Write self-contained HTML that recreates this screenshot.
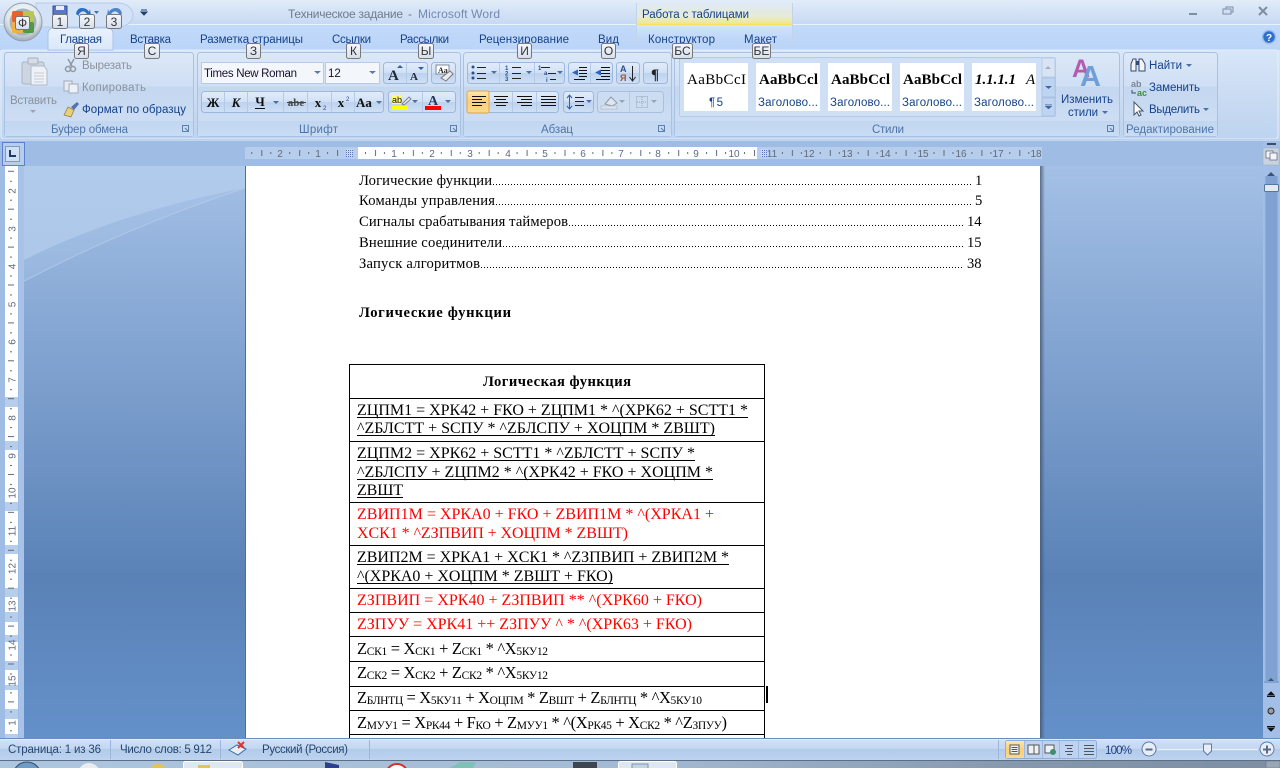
<!DOCTYPE html>
<html lang="ru">
<head>
<meta charset="utf-8">
<title>Техническое задание - Microsoft Word</title>
<style>
html,body{margin:0;padding:0;width:1280px;height:768px;overflow:hidden;background:#a0bde4}
svg{display:block}
text{white-space:pre}
.r{font-family:"Liberation Sans",sans-serif;font-size:11.5px;fill:#15428b}
.g{font-family:"Liberation Sans",sans-serif;font-size:11.5px;fill:#4e74a8}
.d{font-family:"Liberation Sans",sans-serif;font-size:11.5px;fill:#8b929c}
.k{font-family:"Liberation Sans",sans-serif;font-size:12px;fill:#333;text-anchor:middle}
.t{font-family:"Liberation Serif",serif;font-size:14.6px;fill:#000}
.f{font-family:"Liberation Serif",serif;font-size:16px;fill:#000}
.fr{font-family:"Liberation Serif",serif;font-size:16px;fill:#f00}
.m{font-family:"Liberation Serif",serif;font-size:16.5px;fill:#000}
.m tspan.s{font-size:11.5px}
.rl{font-family:"Liberation Sans",sans-serif;font-size:10px;fill:#5f6a7c;text-anchor:middle}
.st{font-family:"Liberation Serif",serif;font-size:15px;fill:#000}
.sb{font-family:"Liberation Sans",sans-serif;font-size:11.5px;fill:#24466f}
</style>
</head>
<body>
<svg xmlns="http://www.w3.org/2000/svg" width="1280" height="768" viewBox="0 0 1280 768">
<defs>
<linearGradient id="title" x1="0" y1="0" x2="0" y2="1"><stop offset="0" stop-color="#e2ecf9"/><stop offset=".5" stop-color="#d3e2f6"/><stop offset="1" stop-color="#c6d9f3"/></linearGradient>
<linearGradient id="tabs" x1="0" y1="0" x2="0" y2="1"><stop offset="0" stop-color="#c2dafa"/><stop offset="1" stop-color="#bad4f8"/></linearGradient>
<linearGradient id="rib" x1="0" y1="0" x2="0" y2="1"><stop offset="0" stop-color="#d8e6f8"/><stop offset=".5" stop-color="#cbdcf3"/><stop offset="1" stop-color="#bdd3ef"/></linearGradient>
<linearGradient id="grp" x1="0" y1="0" x2="0" y2="1"><stop offset="0" stop-color="#dce8f8"/><stop offset=".4" stop-color="#cfdff4"/><stop offset=".41" stop-color="#c4d7f0"/><stop offset="1" stop-color="#d0e0f5"/></linearGradient>
<linearGradient id="lab" x1="0" y1="0" x2="0" y2="1"><stop offset="0" stop-color="#c1d6f0"/><stop offset="1" stop-color="#c9dcf4"/></linearGradient>
<linearGradient id="btn" x1="0" y1="0" x2="0" y2="1"><stop offset="0" stop-color="#e2edfa"/><stop offset=".5" stop-color="#d0e0f5"/><stop offset=".51" stop-color="#bdd2ee"/><stop offset="1" stop-color="#cfe0f6"/></linearGradient>
<linearGradient id="act" x1="0" y1="0" x2="0" y2="1"><stop offset="0" stop-color="#fde6b0"/><stop offset=".5" stop-color="#fbcf7a"/><stop offset="1" stop-color="#fdd88e"/></linearGradient>
<linearGradient id="tip" x1="0" y1="0" x2="0" y2="1"><stop offset="0" stop-color="#f6f8fb"/><stop offset="1" stop-color="#d5dfee"/></linearGradient>
<linearGradient id="tabA" x1="0" y1="0" x2="0" y2="1"><stop offset="0" stop-color="#e9f2fd"/><stop offset="1" stop-color="#dbe8f9"/></linearGradient>
<linearGradient id="ctx" x1="0" y1="0" x2="0" y2="1"><stop offset="0" stop-color="#dfe9f6"/><stop offset=".6" stop-color="#e6ebd8"/><stop offset=".92" stop-color="#f0e98f"/><stop offset="1" stop-color="#f8df4a"/></linearGradient>
<linearGradient id="ctx2" x1="0" y1="0" x2="0" y2="1"><stop offset="0" stop-color="#d6e6fb"/><stop offset="1" stop-color="#bad4f8" stop-opacity="0"/></linearGradient>
<linearGradient id="doc" x1="0" y1="0" x2="0" y2="1"><stop offset="0" stop-color="#a4c0e6"/><stop offset=".27" stop-color="#87a8d4"/><stop offset=".72" stop-color="#5a82b7"/><stop offset="1" stop-color="#6490c9"/></linearGradient>
<linearGradient id="stat" x1="0" y1="0" x2="0" y2="1"><stop offset="0" stop-color="#d3e3f7"/><stop offset=".5" stop-color="#c2d6f0"/><stop offset=".51" stop-color="#b2cbea"/><stop offset="1" stop-color="#bdd3ef"/></linearGradient>
<linearGradient id="task" x1="0" y1="0" x2="1" y2="0"><stop offset="0" stop-color="#adc6df"/><stop offset=".5" stop-color="#a4bad4"/><stop offset=".8" stop-color="#8497ad"/><stop offset="1" stop-color="#7d8ea3"/></linearGradient>
<linearGradient id="shR" x1="0" y1="0" x2="1" y2="0"><stop offset="0" stop-color="#3f5068" stop-opacity=".75"/><stop offset="1" stop-color="#3f5068" stop-opacity="0"/></linearGradient>
<linearGradient id="sbar" x1="0" y1="0" x2="1" y2="0"><stop offset="0" stop-color="#a9c4ea"/><stop offset=".15" stop-color="#7fa2d2"/><stop offset=".85" stop-color="#7fa2d2"/><stop offset="1" stop-color="#a9c4ea"/></linearGradient>
<radialGradient id="orb" cx=".5" cy=".35" r=".7"><stop offset="0" stop-color="#fff"/><stop offset=".6" stop-color="#dfe5ea"/><stop offset="1" stop-color="#8e9aa6"/></radialGradient>
<pattern id="hr" patternUnits="userSpaceOnUse" x="356" y="147" width="37.9" height="12"><rect x="9" y="5" width="1" height="2" fill="#5f6a7c"/><rect x="19" y="3" width="1" height="6" fill="#5f6a7c"/><rect x="28" y="5" width="1" height="2" fill="#5f6a7c"/></pattern>
<pattern id="vr" patternUnits="userSpaceOnUse" x="5" y="190.7" width="13" height="37.9"><rect x="5" y="9" width="2" height="1" fill="#5f6a7c"/><rect x="3" y="18" width="6" height="1" fill="#5f6a7c"/><rect x="5" y="28" width="2" height="1" fill="#5f6a7c"/></pattern>
<pattern id="grid" patternUnits="userSpaceOnUse" width="2" height="2"><rect width="2" height="2" fill="#5878b8"/><rect x="1" width="1" height="2" fill="#c9d8f0"/><rect y="1" width="2" height="1" fill="#c9d8f0"/></pattern>
</defs>

<!-- title + tabs + ribbon -->
<rect width="1280" height="25" fill="url(#title)"/>
<rect y="24" width="1280" height="1" fill="#e9f1fb"/>
<rect y="25" width="1280" height="26" fill="url(#tabs)"/>
<rect y="50" width="1280" height="90" fill="url(#rib)"/>
<rect x="1" y="50" width="1277" height="89" rx="3" fill="url(#rib)" stroke="#e4eefb"/>
<rect y="139" width="1280" height="2" fill="#bdd0ec"/>
<rect y="141" width="1280" height="25" fill="#9ebce4"/>
<rect y="140" width="1280" height="1" fill="#c4d6ee"/>

<!-- QAT -->
<path d="M36 3H118a15 12 0 0 1 15 12a15 12 0 0 1-15 12H36Z" fill="#d3e2f6" stroke="#b6cbe9"/>
<rect x="53" y="6" width="14" height="10" fill="#5a76c4" stroke="#2d4a9e"/>
<rect x="56" y="6" width="8" height="4" fill="#e9eef8"/>
<path d="M76 14q1-6 6-6t7 4l1-3 1 7-7-1 3-1q-3-4-6-2t-2 4Z" fill="#2e6fc1"/>
<path d="M94 11h5l-2.500 3Z" fill="#4a6fa5"/>
<path d="M122 14q-1-6-6-6t-7 4l-1-3-1 7 7-1-3-1q3-4 6-2t2 4Z" fill="#4d84c9"/>
<path d="M141 10h6M141 12h6l-3 3Z" stroke="#27406b" fill="#27406b"/>

<!-- office orb -->
<circle cx="23" cy="22" r="19" fill="url(#orb)" stroke="#8fa0b0"/>
<circle cx="23" cy="22" r="13.500" fill="#a8b2ba"/>
<rect x="12" y="11" width="11" height="11" rx="2" fill="#e8622a"/>
<rect x="23" y="11" width="11" height="11" rx="2" fill="#b8c84a"/>
<rect x="12" y="22" width="11" height="11" rx="2" fill="#f0b23a"/>
<rect x="23" y="22" width="11" height="11" rx="2" fill="#4f9a4a"/>
<rect x="17" y="17" width="12" height="11" fill="#e6e9ec" stroke="#888" stroke-width=".5"/>

<!-- Title text -->
<text x="288" y="18" font-family="Liberation Sans,sans-serif" font-size="12" fill="#6f7b8c" textLength="115">Техническое задание</text>
<text x="408" y="18" font-family="Liberation Sans,sans-serif" font-size="12" fill="#6f7b8c">-</text>
<text x="418" y="18" font-family="Liberation Sans,sans-serif" font-size="12" fill="#7589b0" textLength="82">Microsoft Word</text>

<!-- Context tab -->
<rect x="636" y="3" width="156" height="22" fill="url(#ctx)"/>
<rect x="636" y="25" width="156" height="20" fill="url(#ctx2)"/>
<path d="M636.500 3V46M792.500 3V46" stroke="#c2d3ea"/>
<text x="642" y="18" class="r" textLength="107">Работа с таблицами</text>

<!-- window buttons -->
<rect x="1189" y="13" width="8" height="2" fill="#7e8ea3"/>
<rect x="1226" y="7" width="7" height="5" fill="none" stroke="#7e8ea3"/>
<rect x="1223" y="9" width="8" height="5" fill="#cfdff5" stroke="#7e8ea3"/>
<path d="M1259 7l8 8M1267 7l-8 8" stroke="#7e8ea3" stroke-width="2"/>
<circle cx="1269" cy="37" r="6.500" fill="#2f6fd0" stroke="#9ec0ec" stroke-width="1.500"/>
<text x="1269" y="41" font-family="Liberation Sans,sans-serif" font-size="10" font-weight="bold" fill="#fff" text-anchor="middle">?</text>

<!-- Tabs -->
<path d="M48 50V34q0-6 6-6H107q6 0 6 6V50Z" fill="url(#tabA)" stroke="#a9c4e8"/>
<text x="60" y="43" class="r" textLength="42">Главная</text>
<text x="130" y="43" class="r" textLength="41">Вставка</text>
<text x="200" y="43" class="r" textLength="103">Разметка страницы</text>
<text x="332" y="43" class="r" textLength="39">Ссылки</text>
<text x="400" y="43" class="r" textLength="49">Рассылки</text>
<text x="479" y="43" class="r" textLength="90">Рецензирование</text>
<text x="598" y="43" class="r" textLength="21">Вид</text>
<text x="648" y="43" class="r" textLength="67">Конструктор</text>
<text x="744" y="43" class="r" textLength="33">Макет</text>

<!-- Groups -->
<g stroke="#a9c2e4">
<rect x="4.500" y="52.500" width="189" height="84" rx="3" fill="url(#grp)"/>
<rect x="197.500" y="52.500" width="263" height="84" rx="3" fill="url(#grp)"/>
<rect x="463.500" y="52.500" width="208" height="84" rx="3" fill="url(#grp)"/>
<rect x="674.500" y="52.500" width="445" height="84" rx="3" fill="url(#grp)"/>
<rect x="1123.500" y="52.500" width="94" height="84" rx="3" fill="url(#grp)"/>
</g>
<rect x="5" y="121" width="188" height="15" fill="url(#lab)"/>
<rect x="198" y="121" width="262" height="15" fill="url(#lab)"/>
<rect x="464" y="121" width="207" height="15" fill="url(#lab)"/>
<rect x="675" y="121" width="444" height="15" fill="url(#lab)"/>
<rect x="1124" y="121" width="93" height="15" fill="url(#lab)"/>
<text x="51" y="133" class="g" textLength="77">Буфер обмена</text>
<text x="299" y="133" class="g" textLength="39">Шрифт</text>
<text x="541" y="133" class="g" textLength="32">Абзац</text>
<text x="872" y="133" class="g" textLength="32">Стили</text>
<text x="1126" y="133" class="g" textLength="88">Редактирование</text>
<g fill="none" stroke="#5f7fa8">
<path d="M182.500 125.500h6v6h-6ZM185 128l3 3"/>
<path d="M450.500 125.500h6v6h-6ZM453 128l3 3"/>
<path d="M658.500 125.500h6v6h-6ZM661 128l3 3"/>
<path d="M1107.500 125.500h6v6h-6ZM1110 128l3 3"/>
</g>

<!-- Clipboard -->
<rect x="22" y="62" width="22" height="22" rx="2" fill="#cdd5e0" stroke="#aab5c3"/>
<rect x="28" y="58" width="10" height="6" rx="1" fill="#d8dde5" stroke="#a6b0bd"/>
<path d="M31 66h13l3 4v15H31Z" fill="#eef2f8" stroke="#b0b9c5"/>
<path d="M34 73h10M34 76h10M34 79h10M34 82h10" stroke="#c4cbd6"/>
<text x="10" y="104" class="d" textLength="47">Вставить</text>
<path d="M30 110h6l-3 3Z" fill="#9aa3ae"/>
<path d="M68 59l4 7M74 59l-4 7" stroke="#8f98a5" stroke-width="1.500"/>
<circle cx="68" cy="69" r="2.500" fill="none" stroke="#8f98a5" stroke-width="1.500"/><circle cx="73" cy="69" r="2.500" fill="none" stroke="#8f98a5" stroke-width="1.500"/>
<text x="82" y="69" class="d" textLength="50">Вырезать</text>
<rect x="64" y="81" width="8" height="10" fill="#e6ebf2" stroke="#a2abb8"/><rect x="69" y="84" width="9" height="9" fill="#eef2f8" stroke="#a2abb8"/>
<text x="82" y="91" class="d" textLength="64">Копировать</text>
<path d="M64 115l4-8 6 3-3 7Z" fill="#e8cf78" stroke="#8c7a3a" stroke-width=".7"/>
<path d="M71 107l6-5 2 2-5 6Z" fill="#5572b4"/>
<text x="82" y="113" class="r" textLength="104">Формат по образцу</text>

<!-- Font -->
<rect x="201.500" y="62.500" width="122" height="21" fill="#f3f7fc" stroke="#b5cbe8"/>
<rect x="325.500" y="62.500" width="54" height="21" fill="#f3f7fc" stroke="#b5cbe8"/>
<text x="204" y="77" font-family="Liberation Sans,sans-serif" font-size="11.500" fill="#1a1030" textLength="93">Times New Roman</text>
<text x="328" y="77" font-family="Liberation Sans,sans-serif" font-size="11.500" fill="#1a1030">12</text>
<path d="M314 71h7l-3.500 3ZM369 71h7l-3.500 3Z" fill="#5a7aa8"/>
<rect x="383.500" y="62.500" width="44" height="21" rx="3" fill="url(#btn)" stroke="#9db8dd"/>
<path d="M406.500 63v20" stroke="#b4cae7"/>
<text x="388" y="80" font-family="Liberation Serif,serif" font-size="15" font-weight="bold" fill="#1e2a3a">A</text>
<path d="M397 68h6l-3-3Z" fill="#2f5fa8"/>
<text x="410" y="80" font-family="Liberation Serif,serif" font-size="11" font-weight="bold" fill="#1e2a3a">A</text>
<path d="M418 67h6l-3 3Z" fill="#2f5fa8"/>
<rect x="431.500" y="62.500" width="24" height="21" rx="3" fill="url(#btn)" stroke="#9db8dd"/>
<rect x="436" y="65" width="13" height="9" fill="#fff" stroke="#7c8899"/>
<text x="438" y="73" font-family="Liberation Serif,serif" font-size="8" font-weight="bold" fill="#222">Aa</text>
<path d="M441 78l9-7 3 3-7 7Z" fill="#e8ecf2" stroke="#777"/>

<rect x="201.500" y="91.500" width="182" height="21" rx="3" fill="url(#btn)" stroke="#9db8dd"/>
<path d="M224.500 92v20M247.500 92v20M283.500 92v20M307.500 92v20M331.500 92v20M354.500 92v20" stroke="#b4cae7"/>
<g font-family="Liberation Serif,serif" font-weight="bold" fill="#111" text-anchor="middle">
<text x="213" y="107" font-size="13">Ж</text>
<text x="236" y="107" font-size="13" font-style="italic">К</text>
<text x="260" y="106" font-size="13">Ч</text>
<text x="341" y="107" font-size="13">x</text>
<text x="318" y="107" font-size="13">x</text>
<text x="364" y="107" font-size="13">Aa</text>
</g>
<rect x="255" y="108" width="10" height="1" fill="#111"/>
<text x="296" y="106" text-anchor="middle" font-family="Liberation Serif,serif" font-size="11" font-weight="bold" fill="#444">abe</text>
<path d="M287 102.500h19" stroke="#444"/>
<text x="323" y="110" font-family="Liberation Sans,sans-serif" font-size="6" fill="#27408b">2</text>
<text x="346" y="101" font-family="Liberation Sans,sans-serif" font-size="6" fill="#27408b">2</text>
<path d="M273 101h6l-3 3ZM376 101h6l-3 3Z" fill="#4f6f9f"/>
<rect x="388.500" y="91.500" width="67" height="21" rx="3" fill="url(#btn)" stroke="#9db8dd"/>
<path d="M422.500 92v20" stroke="#b4cae7"/>
<rect x="392" y="106" width="16" height="4" fill="#ff0"/>
<rect x="392" y="95" width="9" height="9" fill="#ffff66"/>
<text x="392" y="103" font-family="Liberation Sans,sans-serif" font-size="9" fill="#111">ab</text>
<path d="M402 104l7-7 2 2-7 6Z" fill="#dfe4ea" stroke="#6b7280" stroke-width=".8"/>
<path d="M412 100h6l-3 3Z" fill="#4f6f9f"/>
<text x="433" y="105" text-anchor="middle" font-family="Liberation Serif,serif" font-size="14" font-weight="bold" fill="#24385a">A</text>
<rect x="425" y="106" width="16" height="4" fill="#f00"/>
<path d="M445 100h6l-3 3Z" fill="#4f6f9f"/>

<!-- Paragraph -->
<rect x="467.500" y="62.500" width="97" height="21" rx="3" fill="url(#btn)" stroke="#9db8dd"/>
<path d="M499.500 63v20M534.500 63v20" stroke="#b4cae7"/>
<g fill="#2b4f8f"><circle cx="473" cy="67" r="1.500"/><circle cx="473" cy="73" r="1.500"/><circle cx="473" cy="78" r="1.500"/></g>
<path d="M477 67.500h9M477 73.500h9M477 78.500h9M512 67.500h9M512 73.500h9M512 78.500h9" stroke="#222"/>
<g font-family="Liberation Sans,sans-serif" font-size="6" font-weight="bold" fill="#2b4f8f"><text x="505" y="70">1</text><text x="505" y="75.500">2</text><text x="505" y="81">3</text><text x="538" y="70">1</text><text x="544" y="75">a</text><text x="546" y="82">i</text></g>
<path d="M541 67.500h9M548 73.500h8M550 79.500h6" stroke="#222"/>
<path d="M491 71h6l-3 3ZM526 71h6l-3 3ZM557 71h6l-3 3Z" fill="#4f6f9f"/>
<rect x="568.500" y="62.500" width="44" height="21" rx="3" fill="url(#btn)" stroke="#9db8dd"/>
<path d="M590.500 63v20" stroke="#b4cae7"/>
<path d="M572 72.500l6-3v6Z" fill="#2f64b8"/><path d="M595 72.500l6-3v6Z" fill="#2f64b8"/>
<path d="M579 67.500h8M579 70.500h8M579 73.500h8M579 76.500h8M574 79.500h11M601 67.500h9M601 70.500h9M601 73.500h9M601 76.500h9M596 79.500h14" stroke="#111"/>
<rect x="616.500" y="62.500" width="23" height="21" rx="3" fill="url(#btn)" stroke="#9db8dd"/>
<text x="620" y="72" font-family="Liberation Sans,sans-serif" font-size="9" font-weight="bold" fill="#2b4f8f">A</text>
<text x="620" y="81" font-family="Liberation Sans,sans-serif" font-size="9" font-weight="bold" fill="#a2513a">Я</text>
<path d="M632.500 66v14M629.500 77l3 4 3-4" stroke="#222" fill="none"/>
<rect x="643.500" y="62.500" width="24" height="21" rx="3" fill="url(#btn)" stroke="#9db8dd"/>
<text x="655" y="79" text-anchor="middle" font-family="Liberation Serif,serif" font-size="15" font-weight="bold" fill="#222">¶</text>

<rect x="467.500" y="91.500" width="91" height="21" rx="3" fill="url(#btn)" stroke="#9db8dd"/>
<rect x="467" y="91" width="22" height="22" rx="2" fill="url(#act)" stroke="#d9a54e"/>
<path d="M512.500 92v20M536.500 92v20" stroke="#b4cae7"/>
<path d="M472 96.500h14M472 99.500h10M472 102.500h14M472 105.500h10M494 96.500h14M496 99.500h10M494 102.500h14M496 105.500h10M517 96.500h15M521 99.500h11M517 102.500h15M521 105.500h11M541 96.500h15M541 99.500h15M541 102.500h15M541 105.500h15" stroke="#111"/>
<rect x="563.500" y="91.500" width="30" height="21" rx="3" fill="url(#btn)" stroke="#9db8dd"/>
<path d="M569.500 95v14M567 98l2.500-3 2.500 3M567 106l2.500 3 2.500-3" stroke="#2f5fa8" fill="none"/>
<path d="M575 97.500h9M575 101.500h9M575 105.500h9" stroke="#222"/>
<path d="M586 100h6l-3 3Z" fill="#4f6f9f"/>
<rect x="597.500" y="91.500" width="66" height="21" rx="3" fill="#ccdcf1" stroke="#a9c0e0"/>
<path d="M605 104l6-7 6 6-5 3Z" fill="#e0e6ee" stroke="#8e9aa9"/>
<rect x="601" y="106" width="16" height="3" fill="#dfe5ec" stroke="#9ba8b8" stroke-width=".5"/>
<path d="M619 100h6l-3 3ZM651 100h6l-3 3Z" fill="#93a5bd"/>
<path d="M629.500 92v20" stroke="#b4cae7"/>
<rect x="636.500" y="96.500" width="11" height="11" fill="none" stroke="#92a3bb" stroke-dasharray="1 1"/>
<path d="M642 97v10M637 102h10" stroke="#92a3bb" stroke-dasharray="1 1"/>

<!-- Styles -->
<rect x="679.500" y="57.500" width="376" height="59" rx="2" fill="#cfe0f5" stroke="#b2c9e8"/>
<g fill="#fff"><rect x="684" y="63" width="64" height="48"/><rect x="756" y="63" width="64" height="48"/><rect x="828" y="63" width="64" height="48"/><rect x="900" y="63" width="64" height="48"/><rect x="972" y="63" width="64" height="48"/></g>
<text x="687" y="84" class="st" textLength="59">AaBbCcI</text>
<g font-weight="bold">
<text x="759" y="84" class="st" textLength="59">AaBbCcl</text>
<text x="831" y="84" class="st" textLength="59">AaBbCcl</text>
<text x="903" y="84" class="st" textLength="59">AaBbCcl</text>
<text x="975" y="84" class="st" font-style="italic" textLength="41">1.1.1.1</text>
</g>
<text x="1026" y="84" class="st" font-style="italic" fill="#333">A</text>
<text x="709" y="106" class="r" textLength="14">¶ 5</text>
<text x="758" y="106" class="r" textLength="60">Заголово...</text>
<text x="830" y="106" class="r" textLength="60">Заголово...</text>
<text x="902" y="106" class="r" textLength="60">Заголово...</text>
<text x="974" y="106" class="r" textLength="60">Заголово...</text>
<rect x="1042" y="58" width="13" height="19" fill="#d8e4f4" stroke="#b9cce8"/>
<rect x="1042" y="78" width="13" height="19" fill="#bfd4f0" stroke="#a9c2e4"/>
<rect x="1042" y="98" width="13" height="18" fill="#bfd4f0" stroke="#a9c2e4"/>
<path d="M1045 69h6l-3-3Z" fill="#a5b0bf"/>
<path d="M1045 86h7l-3.500 3Z" fill="#41679f"/>
<path d="M1045 104.500h7M1045 106h7l-3.500 3Z" fill="#41679f" stroke="#41679f" stroke-width=".5"/>
<text x="1072" y="77" font-family="Liberation Sans,sans-serif" font-size="25" font-weight="bold" fill="#b25bb0">A</text>
<text x="1080" y="86" font-family="Liberation Sans,sans-serif" font-size="29" font-weight="bold" fill="#6f9fd6">A</text>
<text x="1061" y="103" class="r" fill="#244e86" textLength="52">Изменить</text>
<text x="1068" y="116" class="r" textLength="30">стили</text>
<path d="M1102 111h6l-3 3Z" fill="#4f6f9f"/>

<!-- Editing -->
<path d="M1131 71v-7l2-5h3v12ZM1139 71V59h3l3 5v7Z" fill="#f1f3f6" stroke="#334a70"/>
<rect x="1136" y="61" width="3" height="4" fill="#334a70"/>
<text x="1149" y="69" class="r" textLength="33">Найти</text>
<path d="M1186 64h6l-3 3Z" fill="#4f6f9f"/>
<text x="1131" y="87" font-family="Liberation Sans,sans-serif" font-size="9" font-weight="bold" fill="#7c8696">ab</text>
<text x="1137" y="96" font-family="Liberation Sans,sans-serif" font-size="9" font-weight="bold" fill="#3d8f3a">ac</text>
<path d="M1132 90v3h4" stroke="#334a70" fill="none"/>
<text x="1149" y="91" class="r" textLength="51">Заменить</text>
<path d="M1134 102v13l3-3 2 4 2-1-2-4h4Z" fill="#fff" stroke="#4a5568"/>
<text x="1149" y="113" class="r" textLength="51">Выделить</text>
<path d="M1203 108h6l-3 3Z" fill="#4f6f9f"/>

<!-- Key tips -->
<g stroke="#777" fill="url(#tip)">
<rect x="15.500" y="16.500" width="14" height="13" rx="2"/>
<rect x="52.500" y="14.500" width="15" height="14" rx="2"/>
<rect x="79.500" y="14.500" width="15" height="14" rx="2"/>
<rect x="106.500" y="14.500" width="15" height="14" rx="2"/>
<rect x="74.500" y="43.500" width="14" height="15" rx="2"/>
<rect x="144.500" y="43.500" width="15" height="15" rx="2"/>
<rect x="246.500" y="43.500" width="14" height="15" rx="2"/>
<rect x="346.500" y="43.500" width="14" height="15" rx="2"/>
<rect x="418.500" y="43.500" width="15" height="15" rx="2"/>
<rect x="517.500" y="43.500" width="14" height="15" rx="2"/>
<rect x="601.500" y="43.500" width="14" height="15" rx="2"/>
<rect x="672.500" y="43.500" width="20" height="15" rx="2"/>
<rect x="752.500" y="43.500" width="18" height="15" rx="2"/>
</g>
<text x="22.500" y="27" class="k">Ф</text>
<text x="60" y="26" class="k">1</text>
<text x="87" y="26" class="k">2</text>
<text x="114" y="26" class="k">3</text>
<text x="81.500" y="55" class="k">Я</text>
<text x="152" y="55" class="k">С</text>
<text x="253.500" y="55" class="k">З</text>
<text x="353.500" y="55" class="k">К</text>
<text x="426" y="55" class="k">Ы</text>
<text x="524.500" y="55" class="k">И</text>
<text x="608.500" y="55" class="k">О</text>
<text x="682.500" y="55" class="k">БС</text>
<text x="761.500" y="55" class="k">БЕ</text>

<!-- Ruler toggle -->
<rect x="2.500" y="142.500" width="22" height="23" fill="#b7cdec" stroke="#5a80d0"/>
<rect x="5.500" y="146.500" width="14" height="15" fill="#cfe0f5" stroke="#7d9ac8"/>
<path d="M10 150v6h6" stroke="#1f3a68" stroke-width="2" fill="none"/>

<!-- Doc area -->
<rect x="24" y="166" width="1240" height="572" fill="url(#doc)"/>
<path d="M24 166H800L245 188Q120 212 24 260Z" fill="#b6cfee" opacity=".75"/>
<path d="M24 260Q120 212 245 187V188Q130 226 24 282Z" fill="#b0c9ea" opacity=".3"/>
<path d="M24 281Q130 226 245 188" stroke="#c3d6ef" stroke-opacity=".45" stroke-width="1" fill="none"/>

<!-- vertical ruler -->
<rect x="0" y="166" width="24" height="572" fill="#9ebce4"/>
<rect x="19" y="166" width="5" height="572" fill="#a9c3e8"/>
<rect x="5" y="166" width="13" height="572" fill="#fff"/>
<g fill="#b7cdec">
<rect x="5" y="397" width="13" height="10"/><rect x="5" y="441" width="13" height="9"/><rect x="5" y="502" width="13" height="9"/><rect x="5" y="545" width="13" height="9"/><rect x="5" y="588" width="13" height="9"/><rect x="5" y="612" width="13" height="10"/><rect x="5" y="635" width="13" height="7"/><rect x="5" y="661" width="13" height="9"/><rect x="5" y="685" width="13" height="5"/><rect x="5" y="709" width="13" height="10"/><rect x="5" y="734" width="13" height="4"/>
</g>
<rect x="5" y="166" width="13" height="572" fill="url(#vr)"/>
<g>
<text class="rl" transform="translate(15.500 191) rotate(-90)">2</text>
<text class="rl" transform="translate(15.500 229) rotate(-90)">3</text>
<text class="rl" transform="translate(15.500 266.500) rotate(-90)">4</text>
<text class="rl" transform="translate(15.500 304.500) rotate(-90)">5</text>
<text class="rl" transform="translate(15.500 342) rotate(-90)">6</text>
<text class="rl" transform="translate(15.500 380) rotate(-90)">7</text>
<text class="rl" transform="translate(15.500 418) rotate(-90)">8</text>
<text class="rl" transform="translate(15.500 456) rotate(-90)">9</text>
<text class="rl" transform="translate(15.500 493) rotate(-90)">10</text>
<text class="rl" transform="translate(15.500 531) rotate(-90)">11</text>
<text class="rl" transform="translate(15.500 568.500) rotate(-90)">12</text>
<text class="rl" transform="translate(15.500 606) rotate(-90)">13</text>
<text class="rl" transform="translate(15.500 645) rotate(-90)">14</text>
<text class="rl" transform="translate(15.500 681) rotate(-90)">15</text>
<text class="rl" transform="translate(15.500 723) rotate(-90)">1</text>
</g>

<!-- horizontal ruler -->
<rect x="245" y="147" width="797" height="12" fill="#b7cdec"/>
<rect x="358" y="147" width="399" height="12" fill="#fff"/>
<rect x="245" y="147" width="797" height="12" fill="url(#hr)"/>
<rect x="346" y="149" width="7" height="8" fill="url(#grid)"/>
<rect x="761" y="149" width="7" height="8" fill="url(#grid)"/>
<g>
<text x="280" y="157" class="rl">2</text><text x="318" y="157" class="rl">1</text>
<text x="394" y="157" class="rl">1</text><text x="432" y="157" class="rl">2</text><text x="470" y="157" class="rl">3</text><text x="508" y="157" class="rl">4</text><text x="545" y="157" class="rl">5</text><text x="583" y="157" class="rl">6</text><text x="621" y="157" class="rl">7</text><text x="658" y="157" class="rl">8</text><text x="696" y="157" class="rl">9</text><text x="734" y="157" class="rl">10</text><text x="772" y="157" class="rl">11</text><text x="809" y="157" class="rl">12</text><text x="847" y="157" class="rl">13</text><text x="885" y="157" class="rl">14</text><text x="923" y="157" class="rl">15</text><text x="961" y="157" class="rl">16</text><text x="998" y="157" class="rl">17</text><text x="1036" y="157" class="rl">18</text>
</g>

<!-- page -->
<rect x="245" y="166" width="1" height="572" fill="#5c6c84"/>
<rect x="1040" y="166" width="5" height="572" fill="url(#shR)"/>
<rect x="246" y="166" width="794" height="572" fill="#fff"/>

<!-- TOC -->
<g>
<text class="t" x="359" y="185" textLength="133">Логические функции</text>
<text class="t" x="359" y="205" textLength="136">Команды управления</text>
<text class="t" x="359" y="226" textLength="209">Сигналы срабатывания таймеров</text>
<text class="t" x="359" y="247" textLength="143">Внешние соединители</text>
<text class="t" x="359" y="268" textLength="121">Запуск алгоритмов</text>
<text class="t" x="975" y="185">1</text>
<text class="t" x="975" y="205">5</text>
<text class="t" x="967" y="226">14</text>
<text class="t" x="967" y="247">15</text>
<text class="t" x="967" y="268">38</text>
</g>
<g stroke="#000" stroke-dasharray="1 2">
<path d="M493 184.500H971M496 204.500H971M569 225.500H963M503 246.500H963M481 267.500H963"/>
</g>
<text x="359" y="317" class="t" font-weight="bold" textLength="152">Логические функции</text>

<!-- table -->
<g stroke="#000" fill="none">
<path d="M349.500 364.500H764.500M349.500 398.500H764.500M349.500 441.500H764.500M349.500 502.500H764.500M349.500 545.500H764.500M349.500 588.500H764.500M349.500 612.500H764.500M349.500 636.500H764.500M349.500 661.500H764.500M349.500 686.500H764.500M349.500 710.500H764.500M349.500 734.500H764.500M349.500 364V738M764.500 364V738"/>
</g>
<text x="483" y="386" class="t" font-weight="bold" textLength="148">Логическая функция</text>
<text x="357" y="415" class="f" textLength="391">ZЦПМ1 = XРК42 + FКО + ZЦПМ1 * ^(XРК62 + SСТТ1 *</text>
<text x="357" y="433" class="f" textLength="358">^ZБЛСТТ + SСПУ * ^ZБЛСПУ + XОЦПМ * ZВШТ)</text>
<text x="357" y="458" class="f" textLength="338">ZЦПМ2 = XРК62 + SСТТ1 * ^ZБЛСТТ + SСПУ *</text>
<text x="357" y="477" class="f" textLength="356">^ZБЛСПУ + ZЦПМ2 * ^(XРК42 + FКО + XОЦПМ *</text>
<text x="357" y="495" class="f" textLength="46">ZВШТ</text>
<text x="357" y="519" class="fr" textLength="357">ZВИП1М = XРКА0 + FКО + ZВИП1М * ^(XРКА1 +</text>
<text x="357" y="538" class="fr" textLength="271">XСК1 * ^ZЗПВИП + XОЦПМ * ZВШТ)</text>
<text x="357" y="562" class="f" textLength="372">ZВИП2М = XРКА1 + XСК1 * ^ZЗПВИП + ZВИП2М *</text>
<text x="357" y="581" class="f" textLength="256">^(XРКА0 + XОЦПМ * ZВШТ + FКО)</text>
<path d="M357 417.500H748M357 435.500H715M357 460.500H695M357 479.500H713M357 497.500H403M357 564.500H729M357 583.500H613" stroke="#000"/>
<text x="357" y="605" class="fr" textLength="345">ZЗПВИП = XРК40 + ZЗПВИП ** ^(XРК60 + FКО)</text>
<text x="357" y="629" class="fr" textLength="335">ZЗПУУ = XРК41 ++ ZЗПУУ ^ * ^(XРК63 + FКО)</text>
<text x="357" y="654" class="m" textLength="191">Z<tspan class="s" dy="1">СК1</tspan><tspan dy="-1"> = X</tspan><tspan class="s" dy="1">СК1</tspan><tspan dy="-1"> + Z</tspan><tspan class="s" dy="1">СК1</tspan><tspan dy="-1"> * ^X</tspan><tspan class="s" dy="1">5КУ12</tspan></text>
<text x="357" y="678" class="m" textLength="191">Z<tspan class="s" dy="1">СК2</tspan><tspan dy="-1"> = X</tspan><tspan class="s" dy="1">СК2</tspan><tspan dy="-1"> + Z</tspan><tspan class="s" dy="1">СК2</tspan><tspan dy="-1"> * ^X</tspan><tspan class="s" dy="1">5КУ12</tspan></text>
<text x="357" y="703" class="m" textLength="345">Z<tspan class="s" dy="1">БЛНТЦ</tspan><tspan dy="-1"> = X</tspan><tspan class="s" dy="1">5КУ11</tspan><tspan dy="-1"> + X</tspan><tspan class="s" dy="1">ОЦПМ</tspan><tspan dy="-1"> * Z</tspan><tspan class="s" dy="1">ВШТ</tspan><tspan dy="-1"> + Z</tspan><tspan class="s" dy="1">БЛНТЦ</tspan><tspan dy="-1"> * ^X</tspan><tspan class="s" dy="1">5КУ10</tspan></text>
<text x="357" y="728" class="m" textLength="370">Z<tspan class="s" dy="1">МУУ1</tspan><tspan dy="-1"> = X</tspan><tspan class="s" dy="1">РК44</tspan><tspan dy="-1"> + F</tspan><tspan class="s" dy="1">КО</tspan><tspan dy="-1"> + Z</tspan><tspan class="s" dy="1">МУУ1</tspan><tspan dy="-1"> * ^(X</tspan><tspan class="s" dy="1">РК45</tspan><tspan dy="-1"> + X</tspan><tspan class="s" dy="1">СК2</tspan><tspan dy="-1"> * ^Z</tspan><tspan class="s" dy="1">ЗПУУ</tspan><tspan dy="-1">)</tspan></text>
<rect x="766" y="686" width="2" height="17" fill="#000"/>

<!-- scrollbar -->
<rect x="1263" y="141" width="17" height="597" fill="#a3bfe7"/>
<rect x="1264" y="176" width="15" height="505" fill="url(#sbar)"/>
<rect x="1267" y="143" width="9" height="2" fill="#3d4d68"/>
<rect x="1263" y="148" width="16" height="17" fill="#c9d2df" stroke="#9aa8bd" stroke-width=".5"/>
<rect x="1266" y="151" width="7" height="7" fill="#f3f5f9" stroke="#56627a" stroke-width=".7"/>
<rect x="1270" y="153" width="7" height="7" fill="#f3f5f9" stroke="#56627a" stroke-width=".7"/>
<path d="M1267 176h8l-4-4Z" fill="#3f5270"/>
<rect x="1264.500" y="184.500" width="14" height="7" rx="1" fill="#e4e9f1" stroke="#55749f"/>
<rect x="1264" y="681" width="15" height="2" fill="#7fa2d2"/>
<path d="M1268 695h6l-3-3ZM1267 696.500h8" fill="#111" stroke="#111"/>
<circle cx="1271" cy="711" r="3" fill="#9a9da3" stroke="#222"/>
<path d="M1268 728h6l-3 3ZM1267 726.500h8" fill="#111" stroke="#111"/>
<path d="M1268 681h6l-3-3Z" fill="#3f5270"/>

<!-- status bar -->
<rect y="738" width="1280" height="22" fill="url(#stat)"/>
<rect y="738" width="1280" height="1" fill="#6b8cbf"/>
<rect y="739" width="1280" height="1" fill="#e3edf9"/>
<path d="M110.500 740V759M220.500 740V759M369.500 740V759M998.500 740V759" stroke="#9ab5d8"/>
<text x="8" y="753" class="sb" textLength="93">Страница: 1 из 36</text>
<text x="120" y="753" class="sb" textLength="92">Число слов: 5 912</text>
<path d="M229 750l8-5 9 4-8 6Z" fill="#e7eef8" stroke="#3d6aa8"/>
<path d="M238 742l6 6M244 742l-6 6" stroke="#e0362a" stroke-width="2"/>
<text x="262" y="753" class="sb" textLength="86">Русский (Россия)</text>
<rect x="1005.500" y="740.500" width="91" height="18" rx="2" fill="#bed3f0" stroke="#90aed6"/>
<rect x="1006" y="741" width="18" height="17" fill="url(#act)"/>
<path d="M1042.500 741v17M1059.500 741v17M1078.500 741v17M1024.500 741v17" stroke="#9fb9dd"/>
<rect x="1010" y="745" width="9" height="9" fill="#f5f5f5" stroke="#555"/>
<path d="M1011.500 747.500h6M1011.500 749.500h6M1011.500 751.500h6" stroke="#555"/>
<path d="M1028 745h6v9h-6ZM1034 745h5v9h-5Z" fill="#eef1f5" stroke="#555"/>
<rect x="1045" y="745" width="9" height="8" fill="#eef1f5" stroke="#555"/>
<circle cx="1053" cy="752" r="3" fill="#3d8f70"/>
<path d="M1065 745.500h8M1067 748.500h5M1065 751.500h8M1067 754.500h5M1084 745.500h10M1084 748.500h10M1084 751.500h10M1084 754.500h10" stroke="#555"/>
<text x="1105" y="754" font-family="Liberation Sans,sans-serif" font-size="11.500" fill="#1f3f86" textLength="27">100%</text>
<circle cx="1149" cy="749" r="7" fill="#e8eef7" stroke="#5f7aa5"/>
<path d="M1145.500 749.500h7" stroke="#5a6b84" stroke-width="2"/>
<path d="M1157 749.500h101" stroke="#e6eef9" stroke-width="1.500"/>
<path d="M1203.500 744h8v7l-4 4-4-4Z" fill="#e6edf7" stroke="#5f7aa5"/>
<circle cx="1267" cy="749" r="7" fill="#e8eef7" stroke="#5f7aa5"/>
<path d="M1263 749.500h8M1267 745.500v8" stroke="#5a6b84" stroke-width="2"/>

<!-- taskbar -->
<rect y="760" width="1280" height="8" fill="url(#task)"/>
<rect y="760" width="1280" height="1" fill="#5c6f87"/>
<circle cx="27" cy="776" r="14" fill="#6f9cc4" stroke="#2f4d70"/>
<circle cx="89" cy="774" r="11" fill="#e9edf2"/>
<path d="M150 768q8-9 16 0Z" fill="#e5c357"/>
<rect x="183.500" y="761.500" width="59" height="8" rx="2" fill="#dde8f2" stroke="#fff"/>
<rect x="198" y="765" width="12" height="4" fill="#e5c357"/>
<path d="M325 768v-6l14 3v3Z" fill="#2c3f8f"/>
<circle cx="397" cy="775" r="11" fill="#fff" stroke="#d23030" stroke-width="2"/>
<path d="M450 768l10-6h16l-3 6Z" fill="#7ec1b6"/>
<rect x="573" y="762" width="24" height="6" fill="#3e464f"/>
<rect x="618.500" y="761.500" width="58" height="8" rx="2" fill="#dde8f2" stroke="#fff"/>
<rect x="632" y="764" width="16" height="5" fill="#c4d4e6" stroke="#7f93ab"/>
<rect x="1266" y="761" width="14" height="7" fill="#99a6b6" stroke="#5f6e80" stroke-width=".5"/>
</svg>
</body>
</html>
